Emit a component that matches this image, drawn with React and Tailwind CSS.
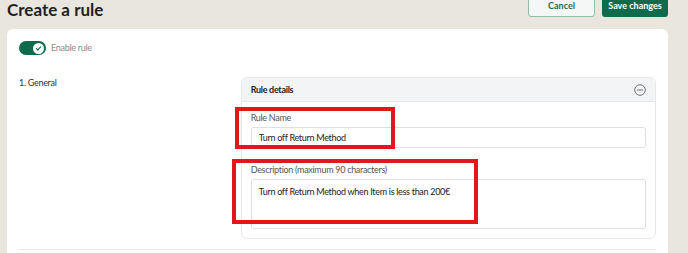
import { useState } from "react";

function Toggle({ on }) {
  return (
    <div className="w-[27px] h-[14px] rounded-full bg-[#0e6b4c] flex items-center justify-end pr-[2px]">
      <div className="w-[11px] h-[11px] rounded-full bg-white flex items-center justify-center">
        {on && (
          <svg width="7" height="7" viewBox="0 0 10 10" fill="none">
            <path d="M2 5.2l2 2 4-4.4" stroke="#0e6b4c" strokeWidth="1.6" strokeLinecap="round" strokeLinejoin="round" />
          </svg>
        )}
      </div>
    </div>
  );
}

function MinusCircle() {
  return (
    <svg width="12" height="12" viewBox="0 0 12 12" fill="none">
      <circle cx="6" cy="6" r="5.3" stroke="#6b7280" strokeWidth="1" />
      <path d="M3.5 6h5" stroke="#6b7280" strokeWidth="1.1" strokeLinecap="round" />
    </svg>
  );
}

export default function App() {
  const [name, setName] = useState("Turn off Return Method");
  const [desc, setDesc] = useState("Turn off Return Method when Item is less than 200€");

  return (
    <div className="relative h-[253px] overflow-hidden bg-[#e9e6e0] font-['Lato',sans-serif] text-[#2b2b2b]">
      <header className="h-[18px] pl-[7px] pr-[20px] flex items-end justify-between">
        <h1 className="text-[17px] leading-[20px] font-bold text-[#1f1f1f] -mb-[2px]">Create a rule</h1>
        <div className="flex items-end gap-[7px] mb-[1px]">
          <button className="w-[67px] h-[24px] pt-[2px] rounded-[3px] border border-[#8fbfa9] bg-[#f4f7f6] text-[9px] font-bold text-[#1d6e52]">
            Cancel
          </button>
          <button className="w-[66px] h-[24px] pt-[2px] rounded-[3px] bg-[#0e6b4c] text-[9px] font-bold text-white">
            Save changes
          </button>
        </div>
      </header>

      <main className="mt-[11px] ml-[7px] mr-[20px] h-[240px] bg-white rounded-t-[6px] px-[12px] pt-[12px] text-[9px] tracking-[-0.3px]">
        <div className="flex items-center gap-[5px] h-[14px]">
          <Toggle on />
          <span className="text-[#8c8c8c]">Enable rule</span>
        </div>

        <div className="mt-[22px] flex">
          <div className="w-[222px] leading-[12px] text-[#333]">1. General</div>

          <section className="w-[416px] border border-[#e7e8ea] rounded-[6px] overflow-hidden">
            <div className="h-[24px] bg-[#f3f4f6] border-b border-[#e7e8ea] px-[9px] flex items-center justify-between">
              <span className="font-bold text-[#222]">Rule details</span>
              <MinusCircle />
            </div>
            <div className="px-[9px] pt-[10px] pb-[9px]">
              <label className="block leading-[12px] text-[#555]">Rule Name</label>
              <input
                value={name}
                onChange={(e) => setName(e.target.value)}
                className="mt-[3px] w-full h-[21px] border border-[#dcdfe3] rounded-[3px] pl-[7px] text-[#222] outline-none"
              />
              <label className="block mt-[16px] leading-[12px] text-[#555]">
                Description (maximum 90 characters)
              </label>
              <textarea
                value={desc}
                onChange={(e) => setDesc(e.target.value)}
                className="mt-[3px] block w-full h-[50px] border border-[#dcdfe3] rounded-[3px] pl-[7px] pt-[6px] leading-[12px] text-[#222] outline-none resize-none"
              />
            </div>
          </section>
        </div>

        <div className="mt-[10px] border-t border-[#e5e7eb]" />
      </main>

      <div className="absolute left-[235px] top-[107px] w-[160px] h-[42px] border-[4px] border-[#e3161c] pointer-events-none" />
      <div className="absolute left-[232px] top-[159px] w-[246px] h-[65px] border-[4px] border-[#e3161c] pointer-events-none" />
    </div>
  );
}
